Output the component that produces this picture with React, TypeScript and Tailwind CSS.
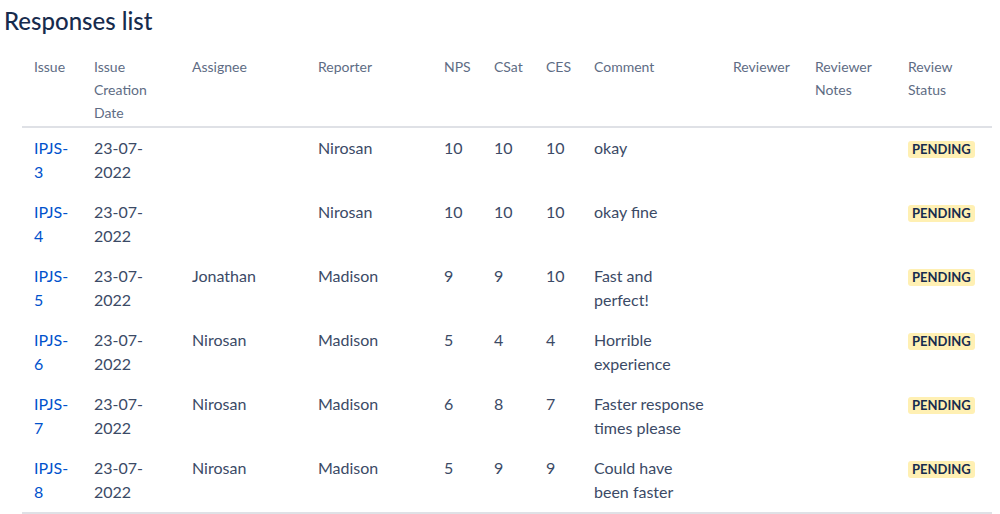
import React from "react";

type Row = {
  id: string;
  date: string;
  assignee: string;
  reporter: string;
  nps: string;
  csat: string;
  ces: string;
  comment: string;
};

const rows: Row[] = [
  { id: "IPJS-3", date: "23-07-2022", assignee: "", reporter: "Nirosan", nps: "10", csat: "10", ces: "10", comment: "okay" },
  { id: "IPJS-4", date: "23-07-2022", assignee: "", reporter: "Nirosan", nps: "10", csat: "10", ces: "10", comment: "okay fine" },
  { id: "IPJS-5", date: "23-07-2022", assignee: "Jonathan", reporter: "Madison", nps: "9", csat: "9", ces: "10", comment: "Fast and perfect!" },
  { id: "IPJS-6", date: "23-07-2022", assignee: "Nirosan", reporter: "Madison", nps: "5", csat: "4", ces: "4", comment: "Horrible experience" },
  { id: "IPJS-7", date: "23-07-2022", assignee: "Nirosan", reporter: "Madison", nps: "6", csat: "8", ces: "7", comment: "Faster response times please" },
  { id: "IPJS-8", date: "23-07-2022", assignee: "Nirosan", reporter: "Madison", nps: "5", csat: "9", ces: "9", comment: "Could have been faster" },
];

const widths = [60, 98, 126, 126, 50, 52, 48, 139, 82, 93, 96];
const headers = ["Issue", "Issue Creation Date", "Assignee", "Reporter", "NPS", "CSat", "CES", "Comment", "Reviewer", "Reviewer Notes", "Review Status"];

export default function App() {
  return (
    <div
      className="w-[1000px] h-[514px] bg-white overflow-hidden pl-1 pt-[5px]"
      style={{ fontFamily: "Lato, 'Noto Sans', sans-serif" }}
    >
      <h1 className="text-[24px] leading-[32px] font-medium text-[#172b4d]">Responses list</h1>
      <table className="ml-[18px] mt-[14px] table-fixed border-collapse w-[970px]">
        <colgroup>
          {widths.map((w, i) => (
            <col key={i} style={{ width: w }} />
          ))}
        </colgroup>
        <thead>
          <tr className="border-b-2 border-[#dfe1e6]">
            {headers.map((h) => (
              <th
                key={h}
                className="text-left align-top font-normal text-[14px] leading-[23px] text-[#5e6c84] pl-3 pr-3 pt-1 pb-[2px]"
              >
                {h}
              </th>
            ))}
          </tr>
        </thead>
        <tbody className="border-b-2 border-[#dfe1e6]">
          {rows.map((r) => (
            <tr key={r.id} className="text-[16px] leading-[24px] text-[#3b4a66]">
              <td className="align-top pl-3 pr-2 py-2">
                <a className="text-[#0052cc]" href="#">{r.id}</a>
              </td>
              <td className="align-top pl-3 pr-6 py-2">{r.date}</td>
              <td className="align-top pl-3 pr-2 py-2">{r.assignee}</td>
              <td className="align-top pl-3 pr-2 py-2">{r.reporter}</td>
              <td className="align-top pl-3 pr-1 py-2">{r.nps}</td>
              <td className="align-top pl-3 pr-1 py-2">{r.csat}</td>
              <td className="align-top pl-3 pr-1 py-2">{r.ces}</td>
              <td className="align-top pl-3 pr-[10px] py-2">{r.comment}</td>
              <td className="align-top pl-3 py-2"></td>
              <td className="align-top pl-3 py-2"></td>
              <td className="align-top pl-3 pr-1 py-2">
                <span className="inline-block mt-[5px] px-1 rounded-[3px] bg-[#fff0b3] text-[#172b4d] text-[13px] leading-[17px] font-bold uppercase">
                  Pending
                </span>
              </td>
            </tr>
          ))}
        </tbody>
      </table>
    </div>
  );
}
